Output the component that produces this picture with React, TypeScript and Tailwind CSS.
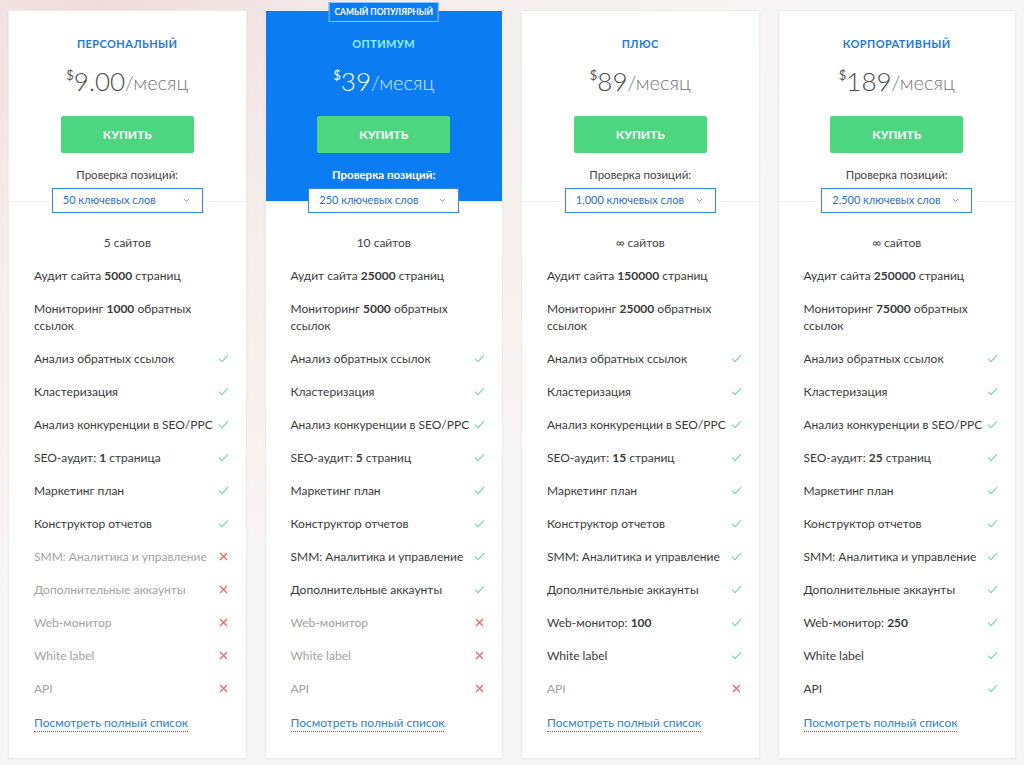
import React from 'react';

type Feature = { text: React.ReactNode; on: boolean | null; wrap?: boolean };

interface Plan {
  name: string;
  price: string;
  keywords: string;
  sites: string;
  popular?: boolean;
  features: Feature[];
}

const B = ({ children }: { children: React.ReactNode }) => <span className="font-bold">{children}</span>;

function makeFeatures(audit: string, links: string, seo: React.ReactNode, smm: boolean, accounts: boolean, web: string | null, white: boolean, api: boolean): Feature[] {
  return [
    { text: <>Аудит сайта <B>{audit}</B> страниц</>, on: null },
    { text: <>Мониторинг <B>{links}</B> обратных ссылок</>, on: null, wrap: true },
    { text: 'Анализ обратных ссылок', on: true },
    { text: 'Кластеризация', on: true },
    { text: 'Анализ конкуренции в SEO/PPC', on: true },
    { text: <>SEO-аудит: {seo}</>, on: true },
    { text: 'Маркетинг план', on: true },
    { text: 'Конструктор отчетов', on: true },
    { text: 'SMM: Аналитика и управление', on: smm },
    { text: 'Дополнительные аккаунты', on: accounts },
    { text: web ? <>Web-монитор: <B>{web}</B></> : 'Web-монитор', on: !!web },
    { text: 'White label', on: white },
    { text: 'API', on: api },
  ];
}

const plans: Plan[] = [
  {
    name: 'Персональный', price: '9.00', keywords: '50 ключевых слов', sites: '5 сайтов',
    features: makeFeatures('5000', '1000', <><B>1</B> страница</>, false, false, null, false, false),
  },
  {
    name: 'Оптимум', price: '39', keywords: '250 ключевых слов', sites: '10 сайтов', popular: true,
    features: makeFeatures('25000', '5000', <><B>5</B> страниц</>, true, true, null, false, false),
  },
  {
    name: 'Плюс', price: '89', keywords: '1,000 ключевых слов', sites: '∞ сайтов',
    features: makeFeatures('150000', '25000', <><B>15</B> страниц</>, true, true, '100', true, false),
  },
  {
    name: 'Корпоративный', price: '189', keywords: '2,500 ключевых слов', sites: '∞ сайтов',
    features: makeFeatures('250000', '75000', <><B>25</B> страниц</>, true, true, '250', true, true),
  },
];

function Check() {
  return (
    <svg width="11" height="9" viewBox="0 0 11 9" fill="none" className="shrink-0">
      <path d="M1 4.6 L4 7.6 L10 1.2" stroke="#7ad6a4" strokeWidth="1.1" />
    </svg>
  );
}

function Cross() {
  return (
    <svg width="9" height="9" viewBox="0 0 9 9" fill="none" className="shrink-0 mr-[1px]">
      <path d="M1 1 L8 8 M8 1 L1 8" stroke="#e46868" strokeWidth="1.3" />
    </svg>
  );
}

function PlanCard({ plan }: { plan: Plan }) {
  const pop = plan.popular;
  return (
    <div className="relative flex-1 bg-white border border-[#ececec] shadow-[0_1px_3px_rgba(0,0,0,0.04)] flex flex-col">
      {pop && (
        <div className="absolute left-1/2 -translate-x-1/2 -top-[9px] bg-[#0b7cf2] border border-[#8cc3ff] px-[5px] h-[20px] flex items-center text-white text-[8.5px] font-bold uppercase whitespace-nowrap z-10">
          Самый популярный
        </div>
      )}
      {/* header */}
      <div className={`flex flex-col items-center pt-[26px] border-b border-[#f0f0f0] ${pop ? 'bg-[#0b7cf2]' : ''}`}>
        <div className={`text-[11px] leading-[14px] font-bold uppercase tracking-[0.4px] ${pop ? 'text-[#8ff0ff]' : 'text-[#1f78d8]'}`}>{plan.name}</div>
        <div className="mt-[15px] h-[30px] flex items-start leading-none">
          <span className={`text-[13px] mt-[3px] ${pop ? 'text-white' : 'text-[#555]'}`}>$</span>
          <span className={`text-[26px] leading-[30px] font-light ${pop ? 'text-white' : 'text-[#4a4a4a]'}`}>{plan.price}</span>
          <span className={`text-[20px] leading-[32px] font-light ${pop ? 'text-[#d4e8ff]' : 'text-[#777]'}`}>/месяц</span>
        </div>
        <button className="mt-[20px] w-[133px] h-[37px] shrink-0 bg-[#4dd680] text-white text-[12px] font-bold uppercase rounded-[2px]">Купить</button>
        <div className={`mt-[14px] text-[11.5px] leading-[16px] ${pop ? 'text-white font-bold' : 'text-[#444]'}`}>Проверка позиций:</div>
        <div className="relative z-10 mt-[5px] -mb-[12px] w-[151px] h-[25px] shrink-0 bg-white border border-[#2f86e4] flex items-center justify-between pl-[10px] pr-[12px]">
          <span className="text-[11px] text-[#2a6fbf]">{plan.keywords}</span>
          <svg width="7" height="5" viewBox="0 0 7 5" fill="none"><path d="M0.8 0.8 L3.5 3.6 L6.2 0.8" stroke="#7b9cc4" strokeWidth="1" /></svg>
        </div>
      </div>
      {/* features */}
      <div className="flex flex-col pt-[24px] pl-[25px] pr-[17px] text-[12px] leading-[17px]">
        <div className="text-center text-[#444] py-[8px] pr-[8px]">{plan.sites}</div>
        {plan.features.map((f, i) => (
          <div key={i} className="flex items-center justify-between py-[8px] gap-[2px]">
            <span className={`${f.wrap ? 'pr-[20px]' : 'whitespace-nowrap'} ${f.on === false ? 'text-[#a2a2a2]' : 'text-[#3a3a3a]'}`}>{f.text}</span>
            {f.on === true && <Check />}
            {f.on === false && <Cross />}
          </div>
        ))}
        <div className="mt-[9px] mb-[27px]">
          <a className="text-[#2d7fd6] border-b border-dotted border-[#2d7fd6] pb-[1px]">Посмотреть полный список</a>
        </div>
      </div>
    </div>
  );
}

export default function App() {
  return (
    <div
      className="w-[1024px] h-[765px] overflow-hidden bg-[#f6f5f5] bg-[radial-gradient(ellipse_at_10%_0%,#f1dcdc_0%,#f5eeee_25%,#f7f6f6_55%)] flex gap-[18px] px-[8px] pt-[10px] items-start"
      style={{ fontFamily: 'Lato, "Noto Sans", sans-serif' }}
    >
      {plans.map((p) => (
        <PlanCard key={p.name} plan={p} />
      ))}
    </div>
  );
}
